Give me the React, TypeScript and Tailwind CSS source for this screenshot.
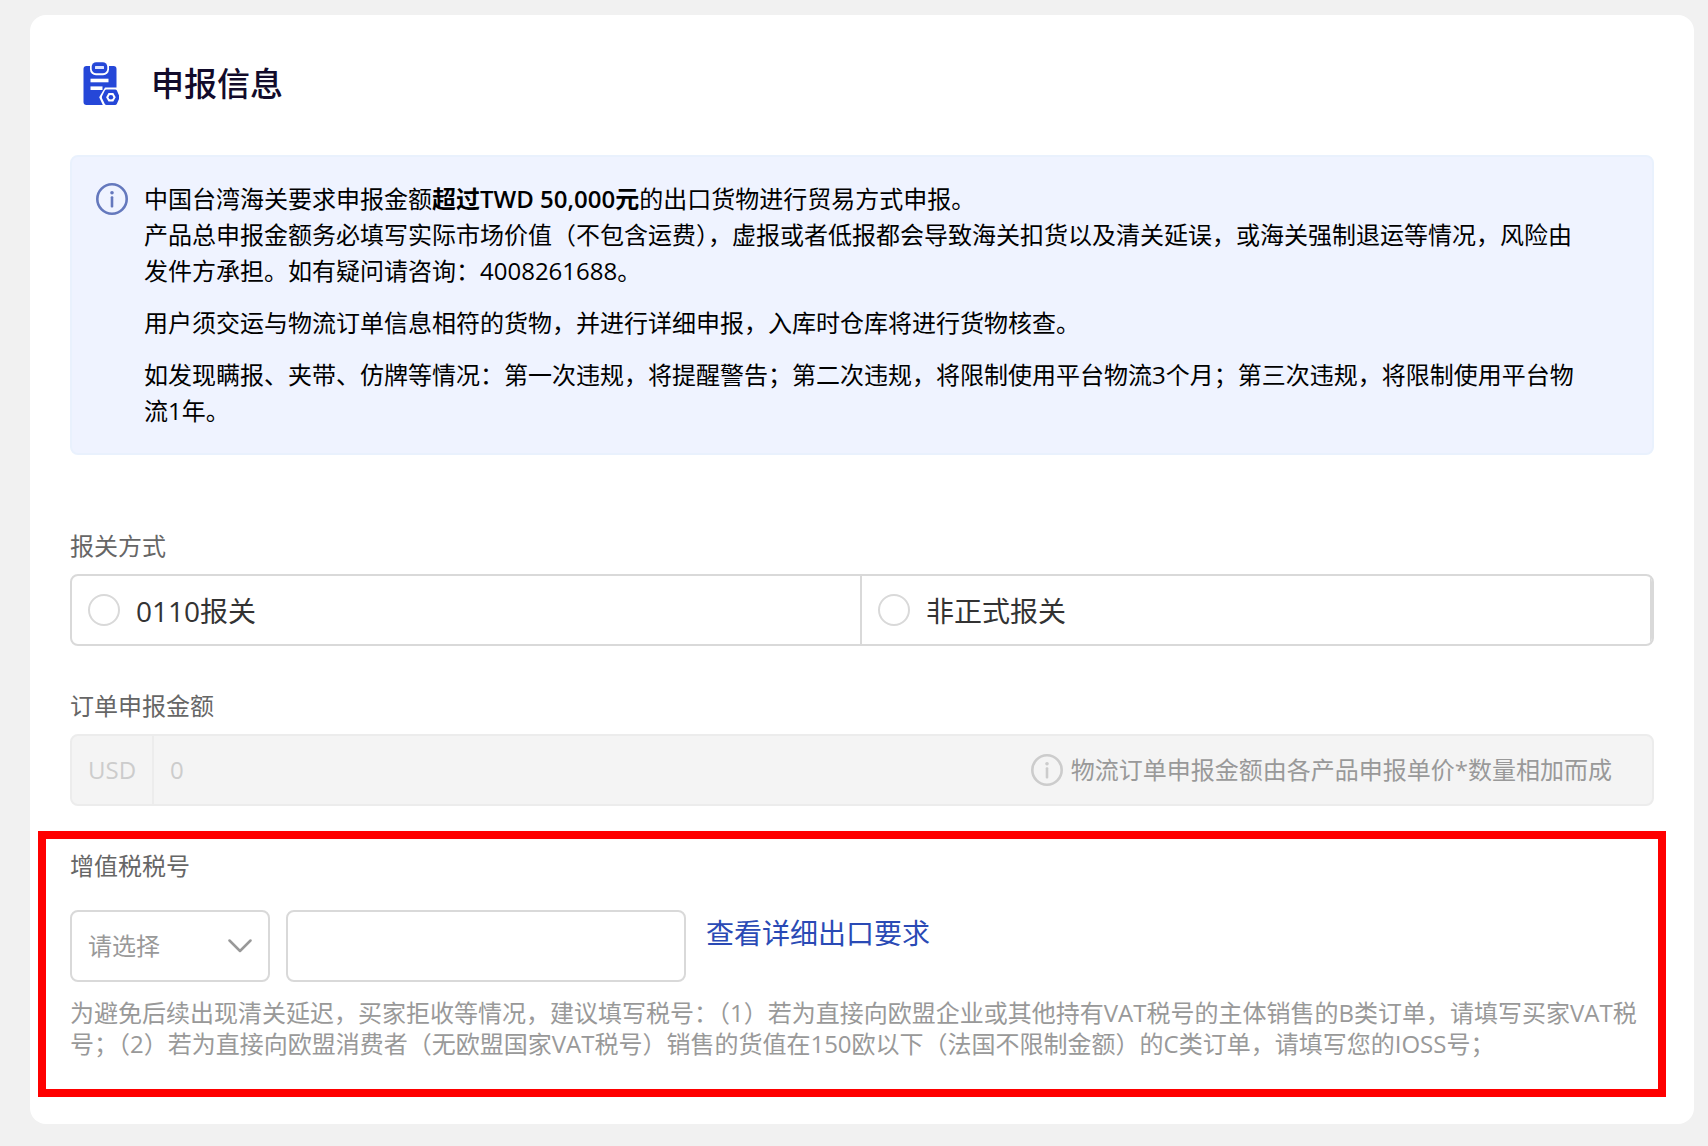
import { useState } from "react";
import type { ReactNode } from "react";

function DeclarationIcon() {
  return (
    <svg width="36" height="44" viewBox="0 0 36 44" fill="none" aria-hidden="true">
      <rect x="0.5" y="4" width="33" height="39" rx="3" fill="#2547d8" />
      <rect x="7" y="-2" width="19" height="15.2" rx="6" fill="#fff" />
      <rect x="8.7" y="0.3" width="15.6" height="10.9" rx="4.5" fill="#2547d8" />
      <rect x="12" y="4" width="9" height="3" rx="0.5" fill="#dfe6ff" />
      <rect x="7.5" y="16.7" width="18" height="3.6" fill="#fff" />
      <rect x="7.5" y="24.4" width="12" height="3.6" fill="#fff" />
      <path d="M22 25.6h13L41 35.3 36 46H21.2l-5-10.7z" fill="#fff" />
      <path
        d="M23.6 27.6h8.6a2 2 0 0 1 1.7 1l2 4.6a3.8 3.8 0 0 1 0 4l-2.1 4.8a2 2 0 0 1-1.7 1h-8.6a2 2 0 0 1-1.7-1l-2.3-4.8a3.8 3.8 0 0 1 0-4l2.3-4.6a2 2 0 0 1 1.8-1z"
        fill="#2547d8"
      />
      <path d="M25.5 31h4.8l2.4 4.3-2.4 4.3h-4.8l-2.4-4.3z" fill="#fff" />
      <circle cx="27.9" cy="35.3" r="2.3" fill="#2547d8" />
    </svg>
  );
}

function InfoIcon({ className }: { className: string }) {
  return (
    <svg width="32" height="32" viewBox="0 0 32 32" fill="none" className={className} aria-hidden="true">
      <circle cx="16" cy="16" r="14.7" stroke="currentColor" strokeWidth="2.6" />
      <circle cx="16" cy="9.7" r="1.8" fill="currentColor" />
      <rect x="14.7" y="13.3" width="2.6" height="11.2" rx="1" fill="currentColor" />
    </svg>
  );
}

function FieldLabel({ htmlFor, children }: { htmlFor: string; children: ReactNode }) {
  return (
    <label htmlFor={htmlFor} className="block text-2xl leading-9 text-[#666]">
      {children}
    </label>
  );
}

const methods = ["0110报关", "非正式报关"];

export default function App() {
  const [method, setMethod] = useState("");
  const [taxNumber, setTaxNumber] = useState("");

  return (
    <main
      lang="zh-CN"
      className="min-h-screen bg-[#f1f1f1] pt-[15px] pr-[14px] pb-5 pl-[30px] font-['Open_Sans','Noto_Sans_CJK_SC',sans-serif] text-2xl"
    >
      <div className="rounded-2xl bg-white pt-8 pr-10 pb-[27px] pl-10">
        <header className="mb-[34px] flex h-[74px] items-center gap-8 pl-[13px]">
          <DeclarationIcon />
          <h1 className="text-[33px] leading-10 font-medium text-[#120b2b]">申报信息</h1>
        </header>

        <section className="flex gap-4 rounded-lg border-2 border-[#e9f1fd] bg-[#eff3ff] py-6 pr-[68px] pl-6 leading-9 text-black">
          <InfoIcon className="mt-0.5 shrink-0 text-[#6478bd]" />
          <div className="space-y-4">
            <p>
              中国台湾海关要求申报金额
              <strong className="leading-8 font-semibold">超过TWD 50,000元</strong>
              的出口货物进行贸易方式申报。
              <br />
              产品总申报金额务必填写实际市场价值（不包含运费），虚报或者低报都会导致海关扣货以及清关延误，或海关强制退运等情况，风险由发件方承担。如有疑问请咨询：4008261688。
            </p>
            <p>用户须交运与物流订单信息相符的货物，并进行详细申报，入库时仓库将进行货物核查。</p>
            <p>
              如发现瞒报、夹带、仿牌等情况：第一次违规，将提醒警告；第二次违规，将限制使用平台物流3个月；第三次违规，将限制使用平台物流1年。
            </p>
          </div>
        </section>

        <fieldset className="mt-[73px]">
          <legend className="mb-2.5 block leading-9 text-[#666]">报关方式</legend>
          <div className="grid grid-cols-2 overflow-hidden rounded-lg border-2 border-[#d9d9d9]">
            {methods.map((name) => (
              <label
                key={name}
                className="flex h-[68px] items-center gap-4 border-r-2 border-[#d9d9d9] pl-4 text-[28px] text-[#333]"
              >
                <input
                  type="radio"
                  name="method"
                  value={name}
                  checked={method === name}
                  onChange={() => setMethod(name)}
                  className="size-8 shrink-0 appearance-none rounded-full border-2 border-[#d9d9d9] bg-white checked:border-8 checked:border-[#2547d8]"
                />
                <span className="pt-1">{name}</span>
              </label>
            ))}
          </div>
        </fieldset>

        <section className="mt-[42px]">
          <FieldLabel htmlFor="amount">订单申报金额</FieldLabel>
          <div className="mt-2.5 flex h-[72px] items-stretch rounded-lg border-2 border-[#ececec] bg-[#f4f4f4] pr-10">
            <span className="flex w-[82px] shrink-0 items-center border-r-2 border-[#ececec] pl-4 text-[#ccc]">
              USD
            </span>
            <input
              id="amount"
              type="text"
              value="0"
              disabled
              className="min-w-0 flex-1 bg-transparent pl-4 text-[#ccc]"
            />
            <span className="flex items-center gap-2 text-[#999]">
              <InfoIcon className="shrink-0 text-[#ccc]" />
              物流订单申报金额由各产品申报单价*数量相加而成
            </span>
          </div>
        </section>

        <section className="mt-[25px] -mr-3 -ml-8 border-8 border-[#ff0000] pt-[9px] pr-1 pb-[30px] pl-6">
          <FieldLabel htmlFor="tax-type">增值税税号</FieldLabel>
          <div className="mt-[26px] flex items-start">
            <div className="relative w-[200px]">
              <select
                id="tax-type"
                defaultValue=""
                className="block h-[72px] w-full appearance-none rounded-lg border-2 border-[#d9d9d9] bg-white pr-14 pl-4 text-[#999]"
              >
                <option value="">请选择</option>
                <option value="vat">VAT</option>
                <option value="ioss">IOSS</option>
              </select>
              <svg
                width="24"
                height="14"
                viewBox="0 0 24 14"
                fill="none"
                className="pointer-events-none absolute top-[29px] right-[18px]"
                aria-hidden="true"
              >
                <path d="M1.5 1.5 12 12 22.5 1.5" stroke="#999" strokeWidth="2.5" strokeLinecap="round" strokeLinejoin="round" />
              </svg>
            </div>
            <input
              type="text"
              aria-label="税号"
              value={taxNumber}
              onChange={(e) => setTaxNumber(e.target.value)}
              className="ml-4 h-[72px] w-[400px] rounded-lg border-2 border-[#d9d9d9] bg-white px-4 text-[#333]"
            />
            <a href="#requirements" className="ml-5 text-[28px] leading-[46px] text-[#2a4ab5]">
              查看详细出口要求
            </a>
          </div>
          <p className="mt-[15px] leading-[31px] text-[#999]">
            为避免后续出现清关延迟，买家拒收等情况，建议填写税号：（1）若为直接向欧盟企业或其他持有VAT税号的主体销售的B类订单，请填写买家VAT税号；（2）若为直接向欧盟消费者（无欧盟国家VAT税号）销售的货值在150欧以下（法国不限制金额）的C类订单，请填写您的IOSS号；
          </p>
        </section>
      </div>
    </main>
  );
}
